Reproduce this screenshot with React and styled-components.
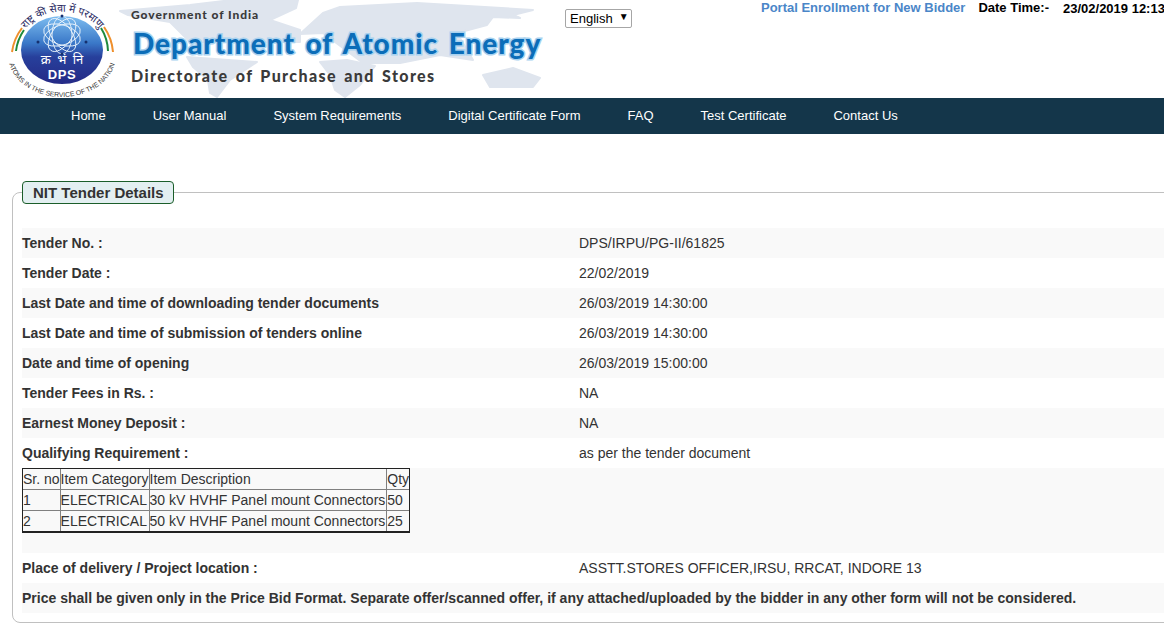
import React from 'react';
import styled, { createGlobalStyle } from 'styled-components';

const GlobalStyle = createGlobalStyle`
    html, body {
        margin: 0;
        padding: 0;
        background: #fff;
        overflow: hidden;
    }
    body {
        font-family: "Liberation Sans", Arial, sans-serif;
        font-size: 14px;
        color: #333;
    }
`;

const Page = styled.div`
    width: 1164px;
    height: 627px;
    overflow: hidden;
`;

const Header = styled.header`
    height: 98px;
    display: flex;
    align-items: flex-start;
`;

const Brand = styled.div`
    position: relative;
    width: 565px;
    height: 98px;
    flex: none;
    display: flex;
    overflow: hidden;
`;

const WorldMap = styled.svg`
    position: absolute;
    left: 0;
    top: 0;
`;

const LogoBox = styled.svg`
    flex: none;
    position: relative;
`;

const BrandText = styled.div`
    position: relative;
    margin-left: 6px;
    padding-top: 7px;
    display: flex;
    flex-direction: column;
`;

const GovLine = styled.div`
    font-family: Lato, sans-serif;
    font-weight: 900;
    font-size: 12px;
    line-height: 16px;
    color: #3a3a3a;
    letter-spacing: 0.95px;
`;

const DeptLine = styled.div`
    margin: 2px 0 0 2px;
    font-family: Lato, sans-serif;
    font-weight: 900;
    font-size: 28px;
    line-height: 36px;
    white-space: nowrap;
    color: #0b6db8;
    -webkit-text-stroke: 3px #a9d2ef;
    paint-order: stroke fill;
    letter-spacing: 0.95px;
    word-spacing: 3px;
`;

const DirLine = styled.div`
    margin-top: 5px;
    font-family: Lato, sans-serif;
    font-weight: 900;
    font-size: 16px;
    line-height: 20px;
    white-space: nowrap;
    color: #3a3a3a;
    letter-spacing: 1.4px;
    word-spacing: 2px;
`;

const LangPicker = styled.div`
    flex: none;
    margin-top: 9px;
    width: 67px;
    height: 19px;
    box-sizing: border-box;
    border: 1px solid #a6a6a6;
    border-radius: 2px;
    color: #000;
    font-size: 13px;
    display: flex;
    align-items: center;
    padding-left: 4px;
    gap: 6px;
    line-height: 17px;
`;

const LangArrow = styled.span`
    font-size: 10px;
    line-height: 12px;
    margin-top: -3px;
`;

const TopInfo = styled.div`
    flex: none;
    margin-left: 129px;
    display: flex;
    white-space: nowrap;
    font-weight: bold;
    font-size: 13px;
    line-height: 16px;
`;

const EnrollLink = styled.a`
    color: #4a86c8;
    text-decoration: none;
`;

const DateLabel = styled.span`
    margin-left: 13px;
    color: #000;
`;

const DateValue = styled.span`
    margin-left: 14px;
    color: #000;
    margin-top: 1px;
`;

const Nav = styled.nav`
    height: 36px;
    box-sizing: border-box;
    padding: 0 0 2px 71px;
    background: #14364a;
    display: flex;
    align-items: center;
    gap: 47px;
`;

const NavLink = styled.a`
    color: #fff;
    text-decoration: none;
    font-size: 13px;
`;

const Details = styled.fieldset`
    margin: 47px 0 0 12px;
    width: 1170px;
    height: 442px;
    box-sizing: border-box;
    padding: 0 0 0 9px;
    border: 1px solid #c0c0c0;
    border-radius: 8px;
`;

const DetailsLegend = styled.legend`
    box-sizing: border-box;
    height: 23px;
    margin-right: 13px;
    padding: 0 10px;
    width: 152px;
    white-space: nowrap;
    border: 1px solid #1b5e2a;
    border-radius: 4px;
    background: #e3eff1;
    font-weight: bold;
    font-size: 15px;
    line-height: 21px;
    color: #333;
`;

const Rows = styled.div`
    margin-top: 24px;
`;

const Row = styled.div`
    display: flex;
    align-items: center;
    height: 30px;
    background: ${(p) => (p.$shaded ? '#f9f9f9' : 'transparent')};
`;

const Label = styled.div`
    width: 557px;
    flex: none;
    font-weight: bold;
    white-space: nowrap;
`;

const Value = styled.div`
    white-space: nowrap;
`;

const Notice = styled.div`
    font-weight: bold;
    white-space: nowrap;
`;

const TableRow = styled.div`
    height: 85px;
    background: #f9f9f9;
`;

const ItemTable = styled.table`
    border-collapse: separate;
    border-spacing: 0;
    border: 1px solid #222;
    border-bottom-width: 2px;
    font-size: 14px;
    color: #333;
`;

const Cell = styled.td`
    border-right: ${(p) => (p.$last ? 'none' : '1px solid #808080')};
    border-top: ${(p) => (p.$first ? 'none' : '1px solid #808080')};
    padding: 0;
    height: 20px;
    line-height: 20px;
    white-space: nowrap;

    &:nth-child(3) {
        padding-right: 1px;
    }
`;

const rows = [
    ['Tender No. :', 'DPS/IRPU/PG-II/61825'],
    ['Tender Date :', '22/02/2019'],
    ['Last Date and time of downloading tender documents', '26/03/2019 14:30:00'],
    ['Last Date and time of submission of tenders online', '26/03/2019 14:30:00'],
    ['Date and time of opening', '26/03/2019 15:00:00'],
    ['Tender Fees in Rs. :', 'NA'],
    ['Earnest Money Deposit :', 'NA'],
    ['Qualifying Requirement :', 'as per the tender document'],
];

const items = [
    ['Sr. no', 'Item Category', 'Item Description', 'Qty'],
    ['1', 'ELECTRICAL', '30 kV HVHF Panel mount Connectors', '50'],
    ['2', 'ELECTRICAL', '50 kV HVHF Panel mount Connectors', '25'],
];

const navItems = ['Home', 'User Manual', 'System Requirements', 'Digital Certificate Form', 'FAQ', 'Test Certificate', 'Contact Us'];

const MapDrawing = () => (
    <WorldMap width="565" height="98" viewBox="0 0 565 98">
        <g fill="#dfe5ee" stroke="#dfe5ee" strokeWidth="2" strokeLinejoin="round">
            <path d="M120 11 L190 5 L232 0 L298 0 L296 8 L270 20 L300 30 L300 42 L190 42 L170 22 L128 15 Z" />
            <path d="M187 57 L257 62 L230 80 L217 97 L210 93 L208 80 L193 67 Z" />
            <path d="M323 13 L340 7 L417 3 L533 10 L513 15 L520 18 L493 17 L487 25 L457 33 L473 60 L440 55 L400 63 L363 63 L323 33 L300 34 Z" />
            <path d="M320 62 L347 60 L375 66 L360 85 L345 97 L335 90 L330 75 Z" />
            <path d="M483 75 L513 68 L540 78 L533 87 L490 87 Z" />
        </g>
    </WorldMap>
);

const Logo = () => (
    <LogoBox width="125" height="98" viewBox="0 0 125 98">
        <defs>
            <path id="arcTop" d="M23 33 A44 38 0 0 1 102 33" />
            <path id="arcBottom" d="M8 55 A54 42 0 0 0 116 55" />
            <linearGradient id="globe" x1="0" y1="0" x2="0" y2="1">
                <stop offset="0%" stopColor="#7dbdf0" />
                <stop offset="40%" stopColor="#3a78c8" />
                <stop offset="60%" stopColor="#27409c" />
                <stop offset="100%" stopColor="#252a86" />
            </linearGradient>
        </defs>
        <ellipse cx="62" cy="50" rx="41" ry="34" fill="url(#globe)" />
        <g fill="none" stroke="#e8f2fb" strokeWidth="0.9">
            <ellipse cx="62" cy="35" rx="10" ry="19" />
            <ellipse cx="62" cy="35" rx="10" ry="19" transform="rotate(36 62 35)" />
            <ellipse cx="62" cy="35" rx="10" ry="19" transform="rotate(72 62 35)" />
            <ellipse cx="62" cy="35" rx="10" ry="19" transform="rotate(108 62 35)" />
            <ellipse cx="62" cy="35" rx="10" ry="19" transform="rotate(144 62 35)" />
        </g>
        <g fill="#16306e">
            <circle cx="62" cy="16" r="1.5" />
            <circle cx="38" cy="42" r="1.5" />
            <circle cx="86" cy="42" r="1.5" />
            <circle cx="62" cy="54" r="1.5" />
        </g>
        <g fill="none" strokeWidth="2">
            <path d="M12 52 A50 50 0 0 1 22 28" stroke="#ef8f2c" />
            <path d="M16 51 A46 46 0 0 1 24 30" stroke="#1f8a3c" />
            <path d="M108 51 A46 46 0 0 0 101 28" stroke="#1f8a3c" />
            <path d="M113 52 A50 50 0 0 0 104 27" stroke="#ef8f2c" />
        </g>
        <text fontFamily="'Noto Sans', 'Liberation Sans', sans-serif" fontSize="10.5" fill="#26265e">
            <textPath href="#arcTop" startOffset="50%" textAnchor="middle">राष्ट्र की सेवा में परमाणु</textPath>
        </text>
        <text x="62" y="64" textAnchor="middle" fontFamily="'Noto Sans', sans-serif" fontSize="13" fill="#fff" wordSpacing="3">क्र भं नि</text>
        <text x="62" y="79" textAnchor="middle" fontFamily="'Liberation Sans', sans-serif" fontWeight="bold" fontSize="13" letterSpacing="0.6" fill="#fff">DPS</text>
        <text fontFamily="'Liberation Sans', sans-serif" fontSize="6.8" fill="#333">
            <textPath href="#arcBottom" startOffset="50%" textAnchor="middle">ATOMS IN THE SERVICE OF THE NATION</textPath>
        </text>
    </LogoBox>
);

const App = () => {
    return (
        <Page>
            <GlobalStyle />
            <Header>
                <Brand>
                    <MapDrawing />
                    <Logo />
                    <BrandText>
                        <GovLine>Government of India</GovLine>
                        <DeptLine>Department of Atomic Energy</DeptLine>
                        <DirLine>Directorate of Purchase and Stores</DirLine>
                    </BrandText>
                </Brand>
                <LangPicker>
                    English
                    <LangArrow>▼</LangArrow>
                </LangPicker>
                <TopInfo>
                    <EnrollLink href="#">Portal Enrollment for New Bidder</EnrollLink>
                    <DateLabel>Date Time:-</DateLabel>
                    <DateValue>23/02/2019 12:13</DateValue>
                </TopInfo>
            </Header>
            <Nav>
                {navItems.map((item) => (
                    <NavLink href="#" key={item}>{item}</NavLink>
                ))}
            </Nav>
            <Details>
                <DetailsLegend>NIT Tender Details</DetailsLegend>
                <Rows>
                    {rows.map(([label, value], i) => (
                        <Row key={label} $shaded={i % 2 === 0 && i < 7}>
                            <Label>{label}</Label>
                            <Value>{value}</Value>
                        </Row>
                    ))}
                    <TableRow>
                        <ItemTable>
                            <tbody>
                                {items.map((cells, r) => (
                                    <tr key={cells[0]}>
                                        {cells.map((cell, i) => (
                                            <Cell key={i} $first={r === 0} $last={i === cells.length - 1}>{cell}</Cell>
                                        ))}
                                    </tr>
                                ))}
                            </tbody>
                        </ItemTable>
                    </TableRow>
                    <Row>
                        <Label>Place of delivery / Project location :</Label>
                        <Value>ASSTT.STORES OFFICER,IRSU, RRCAT, INDORE 13</Value>
                    </Row>
                    <Row $shaded>
                        <Notice>Price shall be given only in the Price Bid Format. Separate offer/scanned offer, if any attached/uploaded by the bidder in any other form will not be considered.</Notice>
                    </Row>
                </Rows>
            </Details>
        </Page>
    );
};

export default App;
